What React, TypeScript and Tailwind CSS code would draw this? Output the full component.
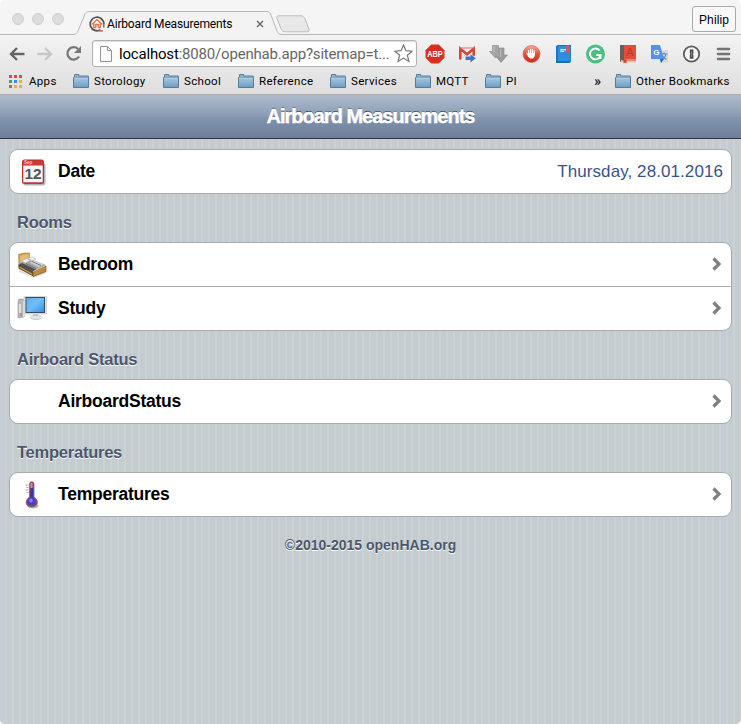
import React from "react";

type IconProps = { className?: string };

const ui = "font-['Roboto','Inter',sans-serif]";

function Favicon() {
  return (
    <svg className="h-4 w-4 shrink-0" viewBox="0 0 16 16" fill="none">
      <path d="M11.500 13.800A6.800 6.800 0 1 1 14.800 8" stroke="#555" strokeWidth="1.700" />
      <path d="M14.800 7.500v4" stroke="#666" strokeWidth="1.400" />
      <path d="M2.800 8.400 8 3.600l5.200 4.800M4.800 7.600v4h2M11.200 7.600v4H9.400M6.800 11.800V8.500h2.400v3" stroke="#e27350" strokeWidth="1.400" />
      <path d="M10 15h4" stroke="#ea6540" strokeWidth="1.600" />
    </svg>
  );
}

function Folder() {
  return (
    <svg className="h-4 w-4 shrink-0" viewBox="0 0 16 16">
      <defs>
        <linearGradient id="folder" x1="0" y1="0" x2="0" y2="1">
          <stop offset="0" stopColor="#a8c8e0" />
          <stop offset="1" stopColor="#6c9dc3" />
        </linearGradient>
      </defs>
      <path d="M1.500 3V.5h4.200V2h9.600v3" fill="#8db3cd" stroke="#587e9b" />
      <path d="M.5 3.500h15v10H.5z" fill="url(#folder)" stroke="#547d9c" />
      <path d="M1 4h14" stroke="#b8d3e5" />
    </svg>
  );
}

function Bookmark({ label, className }: { label: string; className: string }) {
  return (
    <div className={`flex shrink-0 items-center gap-[5px] ${className}`}>
      <Folder />
      <span>{label}</span>
    </div>
  );
}

function Arrow({ className }: IconProps) {
  return (
    <svg className={className} viewBox="0 0 16 16" fill="none" stroke="currentColor" strokeWidth="2.400">
      <path d="M15.500 8H2.500M8 2 2 8l6 6" />
    </svg>
  );
}

function AdBlock() {
  return (
    <svg className="h-5 w-5 overflow-visible" viewBox="0 0 20 20">
      <path d="M6.200.8h7.600l5.400 5.400v7.600l-5.400 5.400H6.200L.8 13.800V6.200z" fill="#d92d20" stroke="#e44b3d" strokeWidth=".6" />
      <text x="10" y="13.400" textAnchor="middle" fontFamily="Liberation Sans, sans-serif" fontWeight="bold" fontSize="9" textLength="15.500" lengthAdjust="spacingAndGlyphs" fill="#fff">ABP</text>
    </svg>
  );
}

function Mail() {
  return (
    <svg className="h-5 w-5" viewBox="0 0 20 20">
      <path d="M2 3.500h16v12H2z" fill="#f4eeec" />
      <path d="M3.300 15.500V4.800L10 10.300l6.700-5.500v7" fill="none" stroke="#d84237" strokeWidth="2.600" />
      <path d="M2 4h16" stroke="#df6a60" />
      <path d="m5 14.500 3-3.500" stroke="#d5c6c4" />
      <path d="M8.500 12.500h5v-2.200l5.300 4-5.300 4.200v-2.600h-5z" fill="#3d75c4" />
    </svg>
  );
}

function Downloads() {
  return (
    <svg className="h-5 w-5" viewBox="0 0 20 20" stroke="#929292" strokeWidth=".7">
      <path d="M3.500 1.500h6v6h3l-6 6.500-6-6.500h3z" fill="#a4a4a4" />
      <path d="M10 4h5v7h3.500L12 18.500 6.500 12H10z" fill="#9a9a9a" />
      <path d="M5 2v6M11.500 5v8" stroke="#bbb" strokeWidth="1.400" />
    </svg>
  );
}

function Hand() {
  return (
    <svg className="h-5 w-5" viewBox="0 0 20 20">
      <defs>
        <linearGradient id="hand" x1="0" y1="0" x2="0" y2="1">
          <stop offset="0" stopColor="#f4ada1" />
          <stop offset=".5" stopColor="#e4513f" />
          <stop offset="1" stopColor="#cc2613" />
        </linearGradient>
      </defs>
      <circle cx="10.500" cy="10" r="8.500" fill="url(#hand)" stroke="#d65343" strokeWidth=".6" />
      <path d="M7.600 10V6.700M9.500 9V5.500M11.400 9V5.600M13.200 10V7M6 9.500l2 3" stroke="#fff" strokeWidth="1.300" strokeLinecap="round" />
      <path d="M7 9h6.800v3l-1.800 2.500H9L6.800 12z" fill="#fff" />
    </svg>
  );
}

function BlueBook() {
  return (
    <svg className="h-5 w-5" viewBox="0 0 20 20">
      <path d="M3 2 5 1h13v16l-1 2H3z" fill="#1a6fae" />
      <path d="M3 2h14.500v15H3z" fill="#2b8ee0" />
      <path d="M3 2h2v15H3z" fill="#2077bf" />
      <path d="M7.200 5h6v1.400h-6zM7.200 7h4v1h-4z" fill="#d8edfb" />
      <path d="M13.300 1.500H17v8.800l-1.850-1.700-1.850 1.700z" fill="#e25155" />
    </svg>
  );
}

function GreenG() {
  return (
    <svg className="h-5 w-5" viewBox="0 0 20 20">
      <circle cx="10.500" cy="10" r="9.500" fill="#4dbe83" />
      <path d="M14.600 6.500A5.400 5.400 0 1 0 15.700 11H11.300M15.500 10.300v4.800" fill="none" stroke="#fff" strokeWidth="1.900" />
    </svg>
  );
}

function RedBook() {
  return (
    <svg className="h-5 w-5" viewBox="0 0 20 20">
      <path d="M3 1h16v17H3z" fill="#ddd0b8" />
      <path d="M3 1h4v17H4L3 17z" fill="#665e5c" />
      <path d="M7 1h12v14H7z" fill="#e64d38" />
      <path d="M4 16h15v2.500H4z" fill="#e1c9a5" />
      <path d="M6.500 15.500h3v4l-1.500-1-1.500 1z" fill="#d74331" />
      <text x="12.800" y="12" textAnchor="middle" fontSize="11" fontFamily="Liberation Sans, sans-serif" fill="#b8392c">A</text>
      <path d="M5 16h14" stroke="#ad3b2d" strokeWidth=".8" />
    </svg>
  );
}

function Translate() {
  return (
    <svg className="h-5 w-5" viewBox="0 0 20 20">
      <path d="M8 6h11v13H11z" fill="#d8dadd" />
      <path d="M11.500 10h7M15 8.500V10M17 10c-.5 3-2.500 4.500-4.500 5.500M13 11c.8 2 2.500 3.500 4.500 4.500" stroke="#66879a" strokeWidth="1.200" fill="none" />
      <path d="M2 1h9l4 14H2z" fill="#5592ef" />
      <path d="M11 15h4l-3 4z" fill="#3559b8" />
      <text x="7.300" y="11" textAnchor="middle" fontSize="8" fontWeight="bold" fontFamily="Liberation Sans, sans-serif" fill="#fff">G</text>
    </svg>
  );
}

function OnePassword() {
  return (
    <svg className="h-5 w-5" viewBox="0 0 20 20">
      <circle cx="10.500" cy="10" r="7.700" fill="#f6f6f6" stroke="#5d5d5d" strokeWidth="1.800" />
      <path d="M8.800 5.500h3.600v4l-.7.7.7.700v3.800H8.800v-4l.7-.7-.7-.7z" fill="#4b4b4b" />
      <path d="M10.600 7v6" stroke="#999" strokeWidth=".7" />
    </svg>
  );
}

function Browser() {
  return (
    <div className={`h-[95px] shrink-0 bg-[#f5f5f5] text-black ${ui}`}>
      <div className="flex h-[35px]">
        <div className="flex w-[76px] gap-2 border-b border-[#b8b8b8] pt-[13px] pl-3">
          <i className="h-3 w-3 rounded-full border border-[#cfcfcf] bg-[#dcdcdc]" />
          <i className="h-3 w-3 rounded-full border border-[#cfcfcf] bg-[#dcdcdc]" />
          <i className="h-3 w-3 rounded-full border border-[#cfcfcf] bg-[#dcdcdc]" />
        </div>
        <div className="relative h-[35px] w-[204px] shrink-0">
          <svg className="absolute inset-0 overflow-visible" width="204" height="36" viewBox="0 0 204 36">
            <path d="M-3 34.500C-.5 34.500 1 33.500 2 31L8.500 15c1-2.500 2-3.500 5-3.500H190c3 0 4 1 5 3.500l6 16c1 2.500 2 3.500 5 3.500V36H-3z" fill="#f3f3f3" />
            <path d="M-3 34.500C-.5 34.500 1 33.500 2 31L8.500 15c1-2.500 2-3.500 5-3.500H190c3 0 4 1 5 3.500l6 16c1 2.500 2 3.500 5 3.500" fill="none" stroke="#b8b8b8" />
          </svg>
          <div className="relative flex h-full items-center pt-[13px] pl-[13px] text-[12px]">
            <Favicon />
            <span className="ml-[2px] w-[145px] whitespace-nowrap tracking-[-0.170px]">Airboard Measurements</span>
            <svg className="ml-[4px] h-[8px] w-[8px]" viewBox="0 0 8 8" stroke="#6e6e6e" strokeWidth="1.500"><path d="m1 1 6 6M7 1 1 7" /></svg>
          </div>
        </div>
        <div className="flex grow justify-between border-b border-[#b8b8b8]">
          <svg className="mt-[15px] -ml-[4px]" width="34" height="18" viewBox="0 0 34 18">
            <path d="M3 .8h22c2 0 3 1 4 3l4 10.500c.5 1.500 0 2.500-2 2.500H10c-3 0-4-1-5-3L1 3.300C.5 1.800 1 .8 3 .8z" fill="#e8e8e8" stroke="#bcbcbc" />
          </svg>
          <div className="mt-[6px] mr-[5px] flex h-[26px] w-[44px] items-center justify-center rounded-[3px] border border-[#a9a9a9] bg-[#f8f8f8] pt-px font-['Liberation_Sans',sans-serif] text-[12px] tracking-[0.100px]">Philip</div>
        </div>
      </div>
      <div className="h-[60px] border-b border-[#adadad] bg-linear-to-b from-[#f3f3f3] to-[#dedede]">
        <div className="flex h-[35px] items-center pt-[2px] pl-[9px]">
          <Arrow className="h-4 w-4 text-[#646464]" />
          <Arrow className="ml-3 h-4 w-4 rotate-180 text-[#c7c7c7]" />
          <svg className="ml-3 h-[17px] w-[17px]" viewBox="0 0 17 17" fill="none">
            <path d="M14 11.500A6.200 6.200 0 1 1 13 4" stroke="#777" strokeWidth="2.300" />
            <path d="M16 1v7H9z" fill="#777" />
          </svg>
          <div className="ml-[10px] flex h-[27px] w-[325px] shrink-0 items-center rounded-[3px] border border-[#b1b1b1] bg-white pl-[7px] shadow-[inset_0_1px_1px_#ddd]">
            <svg className="h-4 w-3" viewBox="0 0 12 16" fill="#fafafa" stroke="#949494"><path d="M.5.5h7l4 4v11H.5zM7.500.5v4h4" /></svg>
            <span className="ml-[7px] w-[275px] shrink-0 pt-px text-[15px] tracking-[-0.190px] whitespace-nowrap text-[#666]"><span className="text-black">localhost</span>:8080/openhab.app?sitemap=t...</span>
            <svg className="h-[19px] w-[19px] shrink-0" viewBox="0 0 19 19" fill="#fff" stroke="#777" strokeWidth="1.200"><path d="m9.500 1 2.400 5.700 6.200.5-4.700 4.100 1.500 6.200-5.400-3.400-5.400 3.400 1.500-6.200L.9 7.200l6.200-.5z" /></svg>
          </div>
          <div className="ml-[8px] flex gap-[12px]">
            <AdBlock /><Mail /><Downloads /><Hand /><BlueBook /><GreenG /><RedBook /><Translate /><OnePassword />
            <svg className="h-5 w-5" viewBox="0 0 20 20" stroke="#747474" strokeWidth="2.600" strokeLinecap="round"><path d="M5 5h11M5 10h11M5 15h11" /></svg>
          </div>
        </div>
        <div className="flex h-[23px] items-center pl-[9px] text-[11.500px] whitespace-nowrap tracking-[0.320px]">
          <div className="grid grid-cols-[repeat(3,3px)] gap-[2px]">
            <i className="h-[3px] bg-[#e84637]" /><i className="h-[3px] bg-[#e84637]" /><i className="h-[3px] bg-[#e84637]" />
            <i className="h-[3px] bg-[#40a35f]" /><i className="h-[3px] bg-[#368bea]" /><i className="h-[3px] bg-[#efb133]" />
            <i className="h-[3px] bg-[#40a35f]" /><i className="h-[3px] bg-[#efb133]" /><i className="h-[3px] bg-[#efb133]" />
          </div>
          <span className="ml-[7px] w-[44px]">Apps</span>
          <Bookmark label="Storology" className="w-[90px]" />
          <Bookmark label="School" className="w-[75px]" />
          <Bookmark label="Reference" className="w-[92px]" />
          <Bookmark label="Services" className="w-[85px]" />
          <Bookmark label="MQTT" className="w-[70px]" />
          <Bookmark label="PI" className="w-[109px]" />
          <span className="w-[21px] text-[15px]">»</span>
          <Bookmark label="Other Bookmarks" className="w-[120px]" />
        </div>
      </div>
    </div>
  );
}

function Calendar() {
  return (
    <svg className="h-8 w-8" viewBox="0 0 32 32">
      <rect x="7" y="7" width="22.500" height="22.500" rx="3" fill="#000" opacity=".3" />
      <rect x="6" y="3.500" width="22" height="24.500" rx="2.500" fill="#bf3430" />
      <path d="M7.300 9.500H26.700V26.300H7.300z" fill="#f7f7f7" />
      <path d="M7 5h20v4H7z" fill="#cf3a32" />
      <text x="8" y="8.300" fontSize="4.500" fontWeight="bold" fontFamily="Liberation Sans, sans-serif" fill="#fbd">Sep</text>
      <text x="17" y="23" textAnchor="middle" fontSize="15.500" fontWeight="bold" fontFamily="Liberation Sans, sans-serif" fill="#555">12</text>
    </svg>
  );
}

function Bed() {
  return (
    <svg className="h-8 w-8" viewBox="0 0 32 32">
      <path d="m3 20 14 8 13-7v3l-12 5L3 23z" fill="#aaa" opacity=".4" />
      <path d="M2.500 5.500C6 3.800 10 3.800 13.500 4V12L3 18z" fill="#c89b51" stroke="#9f7a3c" strokeWidth=".5" />
      <path d="M4 7C7 5.500 10 5 12.500 5V12L4 15z" fill="#dfba7b" />
      <path d="m2.500 15 15 7.500v5l-15-8z" fill="#5d482b" />
      <path d="m3.500 17.500 13 7v1.500l-13-7z" fill="#c59a54" />
      <path d="m17 22.500 13-5.500v5.500l-13 5z" fill="#bd8b3b" stroke="#604823" strokeWidth=".6" />
      <path d="m3 14.500 10-5 17 6.500-13 6.500z" fill="#a4a6aa" />
      <path d="m3 15.500 3-1.500 14 6.500-3 2z" fill="#4d4e51" />
      <path d="m5.500 12 5-2.500 4 1.500-5 3zM12 9l4-1 4 2-4 2z" fill="#efefee" stroke="#aaa" strokeWidth=".5" />
      <path d="m14 13.500 5-2 9 3.500-5 3z" fill="#d3d4d6" />
      <path d="m10 14.500 10 5M16 12.500l9 4" stroke="#606267" strokeWidth=".8" />
      <path d="m17 22.500 13-6" fill="none" stroke="#dfc58b" strokeWidth=".8" />
    </svg>
  );
}

function Computer() {
  return (
    <svg className="h-8 w-8" viewBox="0 0 32 32">
      <defs>
        <linearGradient id="screen" x1="0" y1="0" x2="1" y2="1">
          <stop offset="0" stopColor="#4b9bdf" />
          <stop offset=".5" stopColor="#6bbcf8" />
          <stop offset="1" stopColor="#2e92e5" />
        </linearGradient>
      </defs>
      <path d="M3 6h4l1 2v16l-6 1V8z" fill="#b6b8b9" stroke="#909394" strokeWidth=".6" />
      <path d="M3 11h2v9H3zM7 8h1v16H7z" fill="#e1e3e3" />
      <path d="M5 20v3" stroke="#d75b4f" />
      <path d="M8 3.500h22.500v17.500H8z" fill="#dfe2e5" stroke="#c1c4c6" strokeWidth=".6" />
      <path d="M9.500 4h19.500v16h-19.500z" fill="#344c60" />
      <path d="M10.500 5h17.500v14h-17.500z" fill="url(#screen)" />
      <path d="M10.500 15V5h16C20 12 15 13 10.500 15z" fill="#8bd0fb" opacity=".3" />
      <path d="M17 21h5v3h-5z" fill="#c4c7c9" />
      <ellipse cx="20" cy="24.500" rx="5.500" ry="2" fill="#e4e6e7" stroke="#b8bbbd" strokeWidth=".7" />
    </svg>
  );
}

function Thermometer() {
  return (
    <svg className="h-8 w-8" viewBox="0 0 32 32">
      <ellipse cx="17" cy="27" rx="5.500" ry="2.500" fill="#b9b9b9" />
      <path d="M13.500 18V5c0-3 4.500-3 4.500 0v13c6 4 3.500 10-2.300 10s-8-6-2.200-10z" fill="#8e4656" stroke="#7d5662" strokeWidth=".7" />
      <path d="M15.500 4v7" stroke="#df8795" strokeWidth="2" />
      <path d="M15.700 9v12" stroke="#3538a8" strokeWidth="2.600" />
      <circle cx="15.500" cy="22.500" r="3.800" fill="#4040d4" />
      <ellipse cx="15" cy="21.500" rx="1.700" ry="2" fill="#8184ff" />
      <path d="M9.500 6h3M10.500 8.500h2M9.500 11h3M10.500 13.500h2" stroke="#9e9e9e" strokeWidth=".9" />
    </svg>
  );
}

function Row({ icon, label, value }: { icon?: React.ReactNode; label: string; value?: string }) {
  return (
    <div className="box-content flex h-[43px] items-center">
      <div className="ml-[6px] h-8 w-8">{icon}</div>
      <span className="ml-[10px] text-[17.500px] font-bold tracking-[-0.240px]">{label}</span>
      {value ? (
        <span className="mr-[8px] ml-auto text-[17px] tracking-[0.080px] text-[#385487]">{value}</span>
      ) : (
        <svg className="mr-[9px] mb-px ml-auto h-[14px] w-[10px]" viewBox="0 0 10 14" fill="none" stroke="#808080" strokeWidth="3.200"><path d="m1.500 1.500 5.500 5.500-5.500 5.500" /></svg>
      )}
    </div>
  );
}

function Card({ children }: { children: React.ReactNode }) {
  return <div className="mx-[9px] divide-y divide-[#a8abae] rounded-[9px] border border-[#a8abae] bg-white text-black">{children}</div>;
}

function Heading({ children }: { children: React.ReactNode }) {
  return <h2 className="flex h-[48px] items-center pt-[9px] pl-[17px] text-[16.500px] font-bold tracking-[-0.240px] text-[#4c566c] [text-shadow:0_1px_0_#fff]">{children}</h2>;
}

export default function App() {
  return (
    <div className="flex h-[724px] w-[741px] flex-col overflow-hidden bg-white font-['Liberation_Sans',sans-serif]">
      <div className="flex grow flex-col overflow-hidden rounded-[5px]">
        <Browser />
        <header className="flex h-[44px] shrink-0 items-center justify-center border-b border-[#2d3642] bg-[linear-gradient(#b0bccd_0%,#889bb3_50%,#8195af_51%,#6d7e99_100%)] pb-[2px] text-[20px] font-bold tracking-[-1px] text-white [-webkit-text-stroke:0.500px_white] [text-shadow:0_-1px_0_#344157]">Airboard Measurements</header>
        <main className="grow bg-[linear-gradient(90deg,#c5ccd4_5px,transparent_5px,transparent_721px,#c5ccd4_721px,#c5ccd4_726px,transparent_726px),repeating-linear-gradient(90deg,#c5cccf_0,#c5cccf_5px,#cbd2d5_5px,#cbd2d5_7px)] pt-[10px]">
          <Card><Row icon={<Calendar />} label="Date" value="Thursday, 28.01.2016" /></Card>
          <Heading>Rooms</Heading>
          <Card><Row icon={<Bed />} label="Bedroom" /><Row icon={<Computer />} label="Study" /></Card>
          <Heading>Airboard Status</Heading>
          <Card><Row label="AirboardStatus" /></Card>
          <Heading>Temperatures</Heading>
          <Card><Row icon={<Thermometer />} label="Temperatures" /></Card>
          <footer className="pt-[18px] text-center text-[14px] font-bold text-[#4c566c] [text-shadow:0_1px_0_#fff]">©2010-2015 openHAB.org</footer>
        </main>
      </div>
    </div>
  );
}
